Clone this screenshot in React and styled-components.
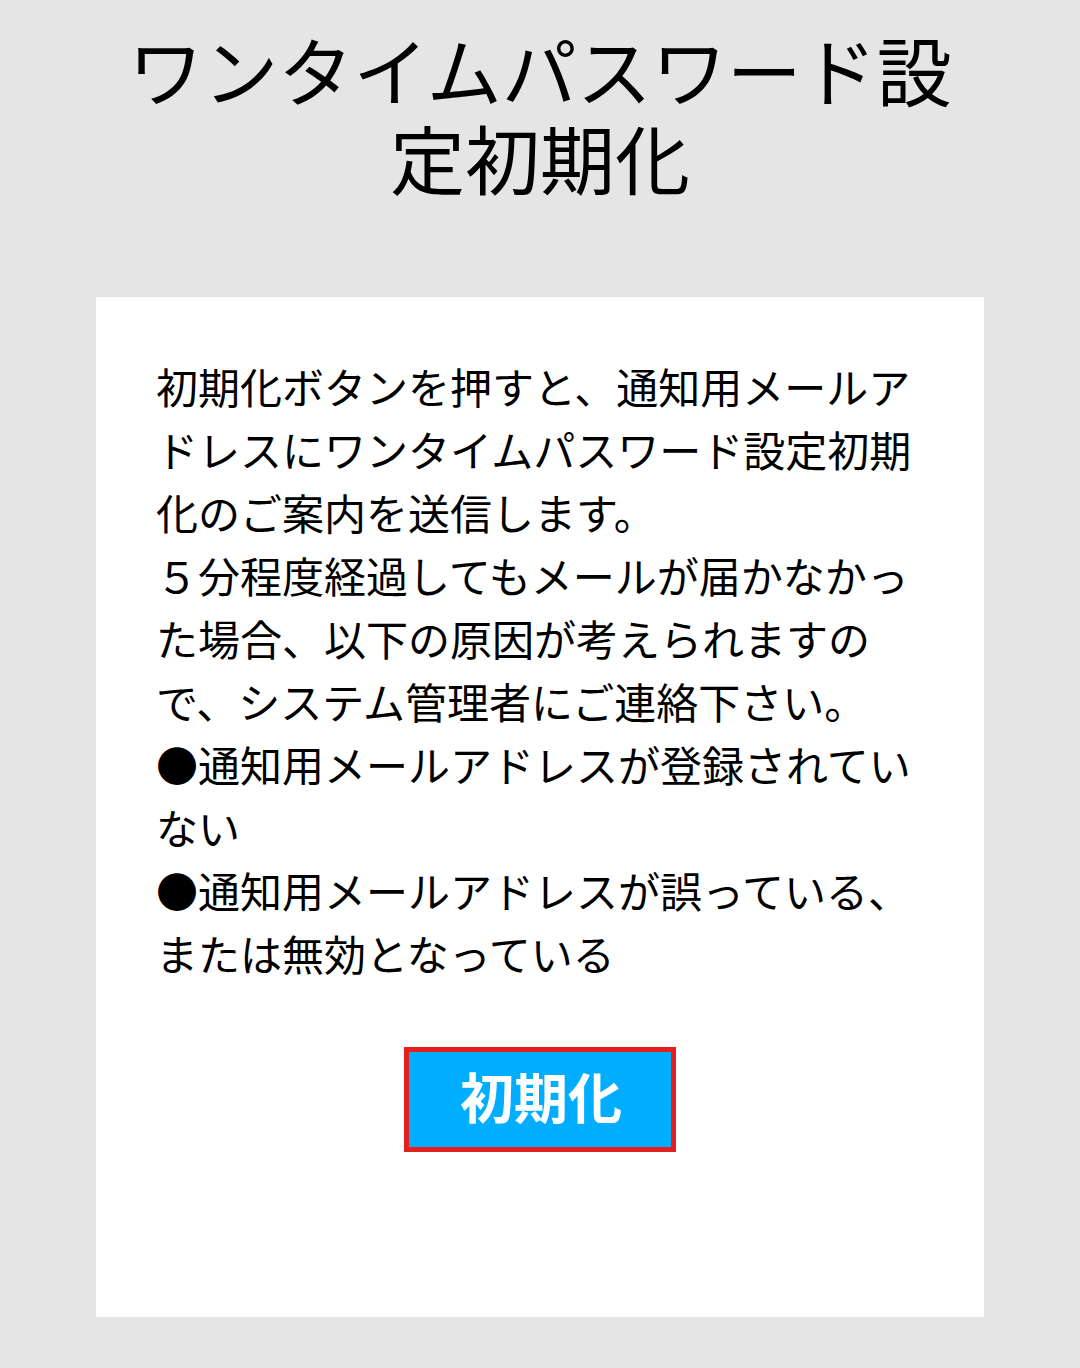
import React from "react";
import styled, { createGlobalStyle } from "styled-components";

const Global = createGlobalStyle`
  html, body { margin: 0; padding: 0; background: #e5e5e5; }
  body { font-family: "Noto Sans CJK JP", "Noto Sans", sans-serif; color: #000; }
`;

const Page = styled.div`
  width: 1080px;
  min-height: 1368px;
  background: #e5e5e5;
  display: flex;
  flex-direction: column;
  align-items: center;
  padding-top: 25px;
  box-sizing: border-box;
`;

const Title = styled.h1`
  margin: 0;
  width: 860px;
  text-align: center;
  font-size: 75px;
  line-height: 88px;
  font-weight: 400;
  letter-spacing: 0;
`;

const Card = styled.section`
  margin-top: 96px;
  width: 888px;
  height: 1020px;
  background: #fff;
  box-sizing: border-box;
  padding: 57px 60px 0;
  display: flex;
  flex-direction: column;
  align-items: center;
`;

const Body = styled.p`
  margin: 0;
  align-self: stretch;
  font-size: 42px;
  line-height: 63px;
  font-weight: 400;
`;

const ResetButton = styled.button`
  margin-top: 63px;
  width: 272px;
  height: 105px;
  box-sizing: border-box;
  border: 5px solid #e3201b;
  background: #00adff;
  color: #fff;
  font-family: "Noto Sans CJK JP", sans-serif;
  font-weight: 700;
  font-size: 54px;
  line-height: 1;
  padding: 0 0 7px 2px;
  cursor: pointer;
`;

export default function App() {
  return (
    <>
      <Global />
      <Page>
        <Title>ワンタイムパスワード設定初期化</Title>
        <Card>
          <Body>
            初期化ボタンを押すと、通知用メールアドレスにワンタイムパスワード設定初期化のご案内を送信します。
            <br />
            ５分程度経過してもメールが届かなかった場合、以下の原因が考えられますので、システム管理者にご連絡下さい。
            <br />
            ●通知用メールアドレスが登録されていない
            <br />
            ●通知用メールアドレスが誤っている、または無効となっている
          </Body>
          <ResetButton type="button">初期化</ResetButton>
        </Card>
      </Page>
    </>
  );
}
